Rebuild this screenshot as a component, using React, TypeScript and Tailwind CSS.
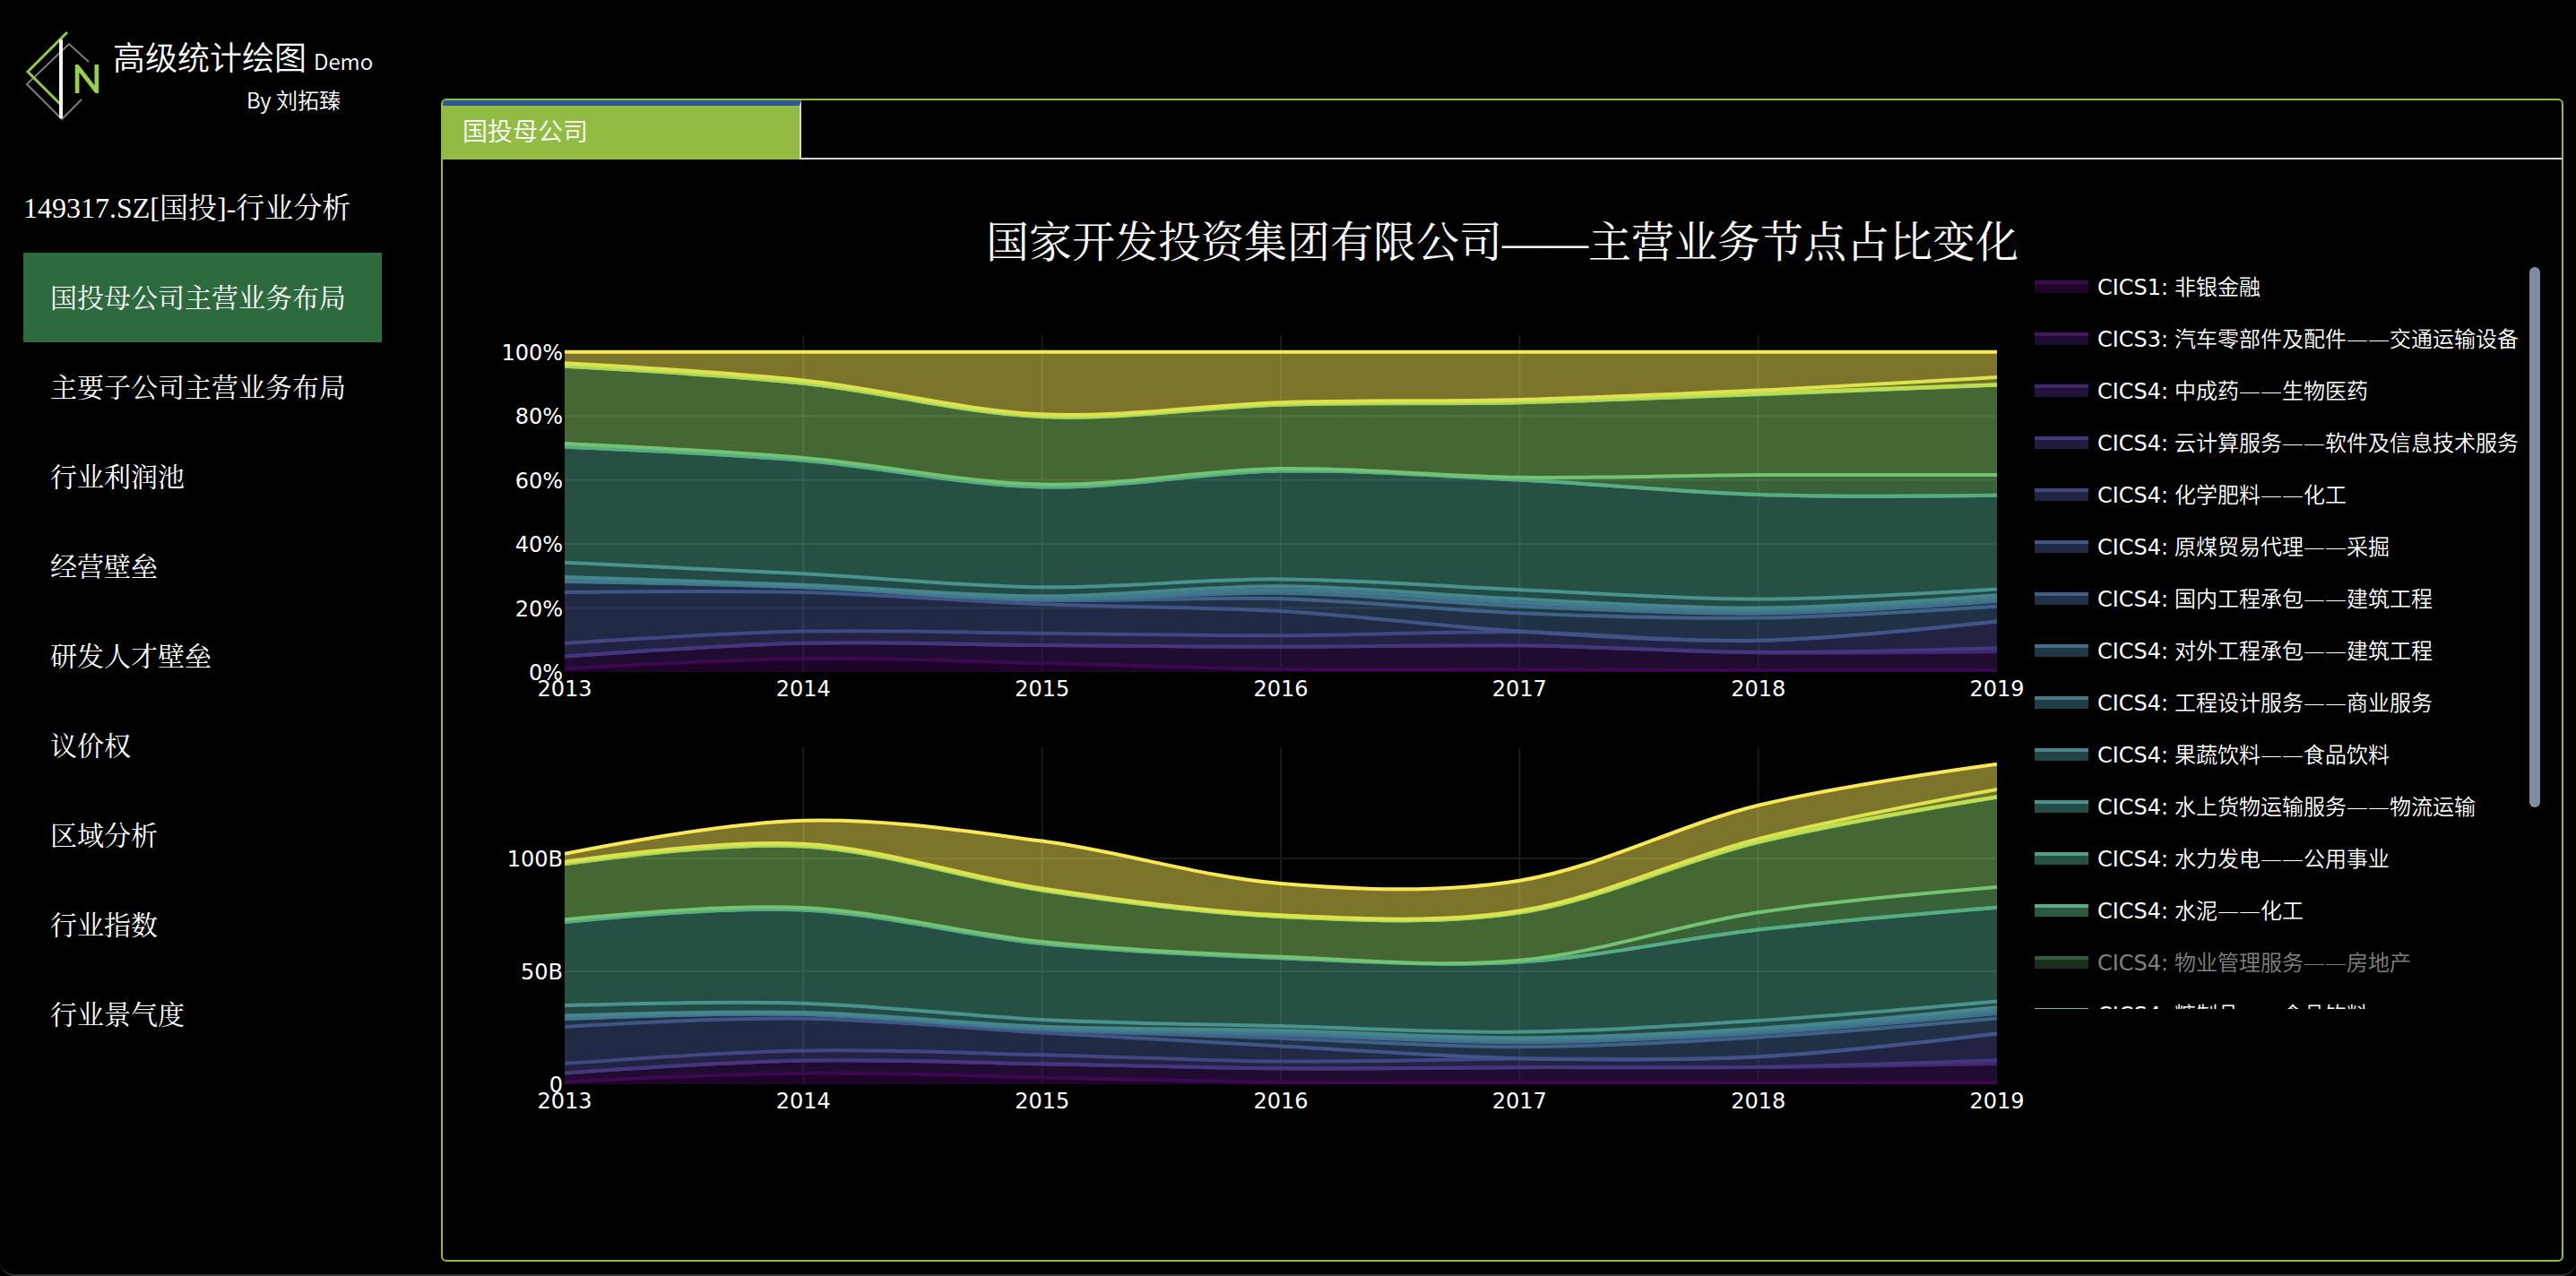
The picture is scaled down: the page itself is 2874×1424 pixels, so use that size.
import { useId } from "react";

type Point = [number, number];

const YEARS = [2013, 2014, 2015, 2016, 2017, 2018, 2019];

// Yearly totals, in billions.
const TOTALS = [102.1, 116.8, 107.7, 88.9, 90.2, 123.5, 141.8];

// Cumulative share of each layer, bottom to top, in percent.
const LAYERS: { color: string; share: number[] }[] = [
  { color: "#3e0751", share: [1.0, 4.2, 2.8, 0.9, 0.8, 0.5, 0.5] },
  { color: "#411761", share: [4.9, 9.0, 8.4, 7.9, 8.3, 6.1, 6.4] },
  { color: "#432772", share: [4.9, 9.0, 8.4, 7.9, 8.3, 6.1, 6.5] },
  { color: "#43377d", share: [4.9, 9.0, 8.4, 7.9, 8.3, 6.2, 7.5] },
  { color: "#434684", share: [9.0, 12.7, 12.1, 11.4, 12.5, 9.8, 15.8] },
  { color: "#415488", share: [24.9, 24.9, 21.2, 19.0, 12.7, 9.9, 15.8] },
  { color: "#3f6189", share: [28.3, 26.5, 22.5, 22.9, 18.4, 16.9, 20.6] },
  { color: "#406e8b", share: [28.4, 26.5, 22.5, 24.7, 20.6, 18.3, 22.1] },
  { color: "#417a8c", share: [28.5, 26.6, 22.8, 25.7, 21.7, 19.1, 23.0] },
  { color: "#45878c", share: [29.7, 27.2, 23.7, 26.8, 22.8, 20.0, 24.0] },
  { color: "#48938b", share: [34.2, 30.7, 26.5, 29.0, 25.7, 22.8, 25.9] },
  { color: "#4d9f88", share: [70.3, 66.1, 57.8, 62.8, 60.0, 55.4, 55.2] },
  { color: "#57ad82", share: [70.3, 66.1, 57.8, 62.8, 60.0, 55.4, 55.2] },
  { color: "#73c372", share: [71.4, 66.9, 58.6, 63.5, 60.8, 61.6, 61.6] },
  { color: "#8ace65", share: [95.5, 90.2, 79.7, 83.5, 84.2, 86.7, 89.6] },
  { color: "#a3d65a", share: [95.5, 90.2, 79.8, 83.5, 84.2, 86.8, 89.7] },
  { color: "#bfdd51", share: [96.1, 90.7, 80.1, 83.8, 84.7, 87.1, 89.8] },
  { color: "#dde34e", share: [96.5, 91.1, 80.5, 84.2, 85.1, 88.0, 92.1] },
  { color: "#f9e855", share: [100, 100, 100, 100, 100, 100, 100] },
];

const LEGEND = [
  { code: "CICS1:", label: "非银金融", color: "#3e0751" },
  { code: "CICS3:", label: "汽车零部件及配件——交通运输设备", color: "#411761" },
  { code: "CICS4:", label: "中成药——生物医药", color: "#432772" },
  { code: "CICS4:", label: "云计算服务——软件及信息技术服务", color: "#43377d" },
  { code: "CICS4:", label: "化学肥料——化工", color: "#434684" },
  { code: "CICS4:", label: "原煤贸易代理——采掘", color: "#415488" },
  { code: "CICS4:", label: "国内工程承包——建筑工程", color: "#3f6189" },
  { code: "CICS4:", label: "对外工程承包——建筑工程", color: "#406e8b" },
  { code: "CICS4:", label: "工程设计服务——商业服务", color: "#417a8c" },
  { code: "CICS4:", label: "果蔬饮料——食品饮料", color: "#45878c" },
  { code: "CICS4:", label: "水上货物运输服务——物流运输", color: "#48938b" },
  { code: "CICS4:", label: "水力发电——公用事业", color: "#4d9f88" },
  { code: "CICS4:", label: "水泥——化工", color: "#57ad82" },
  { code: "CICS4:", label: "物业管理服务——房地产", color: "#62b77c", hidden: true },
  { code: "CICS4:", label: "糖制品——食品饮料", color: "#73c372" },
];

const NAV = [
  "国投母公司主营业务布局",
  "主要子公司主营业务布局",
  "行业利润池",
  "经营壁垒",
  "研发人才壁垒",
  "议价权",
  "区域分析",
  "行业指数",
  "行业景气度",
];

// Plot area inside each chart's 1730 x 460 view box.
const LEFT = 90;
const RIGHT = 1688;
const TOP = 10;
const BOTTOM = 386;

// Control points on both sides of a point of a centripetal Catmull-Rom spline.
function tangent(prev: Point, cur: Point, next: Point): [Point, Point] {
  const d1 = [prev[0] - cur[0], prev[1] - cur[1]];
  const d2 = [next[0] - cur[0], next[1] - cur[1]];
  const a1 = Math.pow(d1[0] * d1[0] + d1[1] * d1[1], 0.25);
  const a2 = Math.pow(d2[0] * d2[0] + d2[1] * d2[1], 0.25);
  const nx = a2 * a2 * d1[0] - a1 * a1 * d2[0];
  const ny = a2 * a2 * d1[1] - a1 * a1 * d2[1];
  const k1 = 3 * a2 * (a1 + a2);
  const k2 = 3 * a1 * (a1 + a2);
  return [
    [cur[0] + nx / k1, cur[1] + ny / k1],
    [cur[0] - nx / k2, cur[1] - ny / k2],
  ];
}

const fmt = (p: Point) => `${p[0].toFixed(2)},${p[1].toFixed(2)}`;

// Spline through the points, without the leading move command.
function spline(pts: Point[]): string {
  const n = pts.length;
  const t: [Point, Point][] = [];
  for (let i = 1; i < n - 1; i++) t.push(tangent(pts[i - 1], pts[i], pts[i + 1]));
  let d = `Q${fmt(t[0][0])} ${fmt(pts[1])}`;
  for (let i = 2; i < n - 1; i++) d += `C${fmt(t[i - 2][1])} ${fmt(t[i - 1][0])} ${fmt(pts[i])}`;
  return d + `Q${fmt(t[n - 3][1])} ${fmt(pts[n - 1])}`;
}

type Tick = { label: string; value: number };

type ChartProps = {
  title: string;
  ticks: Tick[];
  perUnit: number;
  valueOf: (share: number, year: number) => number;
};

function StackedChart({ title, ticks, perUnit, valueOf }: ChartProps) {
  const clip = useId();
  const step = (RIGHT - LEFT) / (YEARS.length - 1);
  const y = (v: number) => BOTTOM - v * perUnit;
  const rows = LAYERS.map((layer) =>
    layer.share.map((s, i): Point => [LEFT + i * step, y(valueOf(s, i))]),
  );
  const base = YEARS.map((_, i): Point => [LEFT + i * step, BOTTOM]);

  return (
    <svg
      viewBox="0 0 1730 460"
      role="img"
      aria-label={title}
      className="block h-auto w-full fill-white font-['DejaVu_Sans',sans-serif] text-2xl"
    >
      <clipPath id={clip}>
        <rect x={LEFT} y={TOP} width={RIGHT - LEFT} height={BOTTOM - TOP} />
      </clipPath>
      <g stroke="#1a1a1a" strokeWidth="2">
        {YEARS.slice(1, -1).map((year, i) => (
          <line key={year} x1={LEFT + (i + 1) * step} x2={LEFT + (i + 1) * step} y1={TOP} y2={BOTTOM} />
        ))}
        {ticks.slice(1).map((t) => (
          <line key={t.label} x1={LEFT} x2={RIGHT} y1={y(t.value)} y2={y(t.value)} />
        ))}
      </g>
      <g clipPath={`url(#${clip})`}>
        {LAYERS.map((layer, i) => {
          const lower = [...(i ? rows[i - 1] : base)].reverse();
          return (
            <path
              key={layer.color}
              d={`M${fmt(rows[i][0])}${spline(rows[i])}L${fmt(lower[0])}${spline(lower)}Z`}
              fill={layer.color}
              fillOpacity="0.5"
            />
          );
        })}
        {LAYERS.map((layer, i) => (
          <path
            key={layer.color}
            d={`M${fmt(rows[i][0])}${spline(rows[i])}`}
            fill="none"
            stroke={layer.color}
            strokeWidth="4"
          />
        ))}
      </g>
      {ticks.map((t) => (
        <text key={t.label} x={LEFT - 2} y={y(t.value) + 9} textAnchor="end">
          {t.label}
        </text>
      ))}
      {YEARS.map((year, i) => (
        <text key={year} x={LEFT + i * step} y={BOTTOM + 27} textAnchor="middle">
          {year}
        </text>
      ))}
    </svg>
  );
}

function Logo() {
  return (
    <svg viewBox="0 0 90 140" aria-hidden="true" className="h-[140px] w-[90px] shrink-0" fill="none">
      <path d="M73 69 51 49 4 94 43 133 65 111" stroke="#7d7d7d" strokeWidth="2" />
      <path d="M49 36 5 80 41 116" stroke="#92c843" strokeWidth="3" />
      <path d="M42 44V132" stroke="#f2f2f2" strokeWidth="4" />
      <text x="54" y="104" className="fill-[#9bd04b] font-['Lato',sans-serif] text-[44px] font-semibold">
        N
      </text>
    </svg>
  );
}

export default function App() {
  return (
    <div className="bg-black font-['Noto_Sans_CJK_SC',sans-serif] text-white">
      <div className="flex min-h-screen rounded-b-2xl border-b-2 border-[#333333]">
        <aside className="w-[492px] shrink-0 pl-[26px]">
          <header className="flex h-[183px]">
            <Logo />
            <div className="ml-[10px] pt-[38px]">
              <h1 className="text-4xl leading-[48px] font-[350]">
                高级统计绘图 <span className="text-2xl">Demo</span>
              </h1>
              <p className="mt-[7px] ml-[149px] text-2xl leading-[36px] font-[350]">By 刘拓臻</p>
            </div>
          </header>
          <nav className="w-[400px] font-['Liberation_Serif','Noto_Serif_CJK_SC','Noto_Sans_CJK_SC',serif]">
            <h2 className="text-[32px] leading-[99px] whitespace-nowrap">149317.SZ[国投]-行业分析</h2>
            <ul>
              {NAV.map((item, i) => (
                <li key={item}>
                  <a
                    href="#"
                    aria-current={i === 0 ? "page" : undefined}
                    className={
                      i === 0
                        ? "block h-[100px] bg-[#2d6a3e] pl-[30px] text-3xl leading-[102px]"
                        : "block h-[100px] pl-[30px] text-3xl leading-[102px]"
                    }
                  >
                    {item}
                  </a>
                </li>
              ))}
            </ul>
          </nav>
        </aside>

        <main className="flex min-w-0 flex-1 flex-col pt-[110px] pr-[14px] pb-[14px]">
          <section className="flex-1 overflow-hidden rounded-md border-2 border-[#92bb44]">
            <div role="tablist" className="flex h-[66px]">
              <button
                type="button"
                role="tab"
                aria-selected="true"
                className="w-[400px] border-t-[6px] border-r-2 border-t-[#2f5897] border-r-[#d6d6d6] bg-[#92bb44] pb-[6px] pl-[22px] text-left text-[28px] leading-[40px] font-[350]"
              >
                国投母公司
              </button>
              <div className="flex-1 border-b-2 border-[#d6d6d6]" />
            </div>

            <h2 className="h-[113px] pt-[69px] text-center font-['Liberation_Serif','Noto_Serif_CJK_SC','Noto_Sans_CJK_SC',serif] text-5xl leading-[48px]">
              国家开发投资集团有限公司——主营业务节点占比变化
            </h2>

            <div className="flex items-start pr-6 pl-[46px]">
              <div className="min-w-0 flex-1 pt-[73px]">
                <StackedChart
                  title="主营业务节点占比"
                  perUnit={3.573}
                  valueOf={(share) => share}
                  ticks={[
                    { label: "0%", value: 0 },
                    { label: "20%", value: 20 },
                    { label: "40%", value: 40 },
                    { label: "60%", value: 60 },
                    { label: "80%", value: 80 },
                    { label: "100%", value: 100 },
                  ]}
                />
                <StackedChart
                  title="主营业务节点收入"
                  perUnit={2.52}
                  valueOf={(share, i) => (share / 100) * TOTALS[i]}
                  ticks={[
                    { label: "0", value: 0 },
                    { label: "50B", value: 50 },
                    { label: "100B", value: 100 },
                  ]}
                />
              </div>

              <div className="flex w-[564px] shrink-0 justify-between">
                <ul className="h-[835px] overflow-hidden font-['DejaVu_Sans','Noto_Sans_CJK_SC',sans-serif] text-2xl">
                  {LEGEND.map((entry) => (
                    <li
                      key={entry.code + entry.label}
                      className={
                        entry.hidden
                          ? "flex h-[58px] items-center whitespace-nowrap opacity-50"
                          : "flex h-[58px] items-center whitespace-nowrap"
                      }
                    >
                      <svg viewBox="0 0 60 14" aria-hidden="true" className="h-[14px] w-[60px]">
                        <rect y="2" width="60" height="12" fill={entry.color} fillOpacity="0.5" />
                        <rect width="60" height="4" fill={entry.color} />
                      </svg>
                      <span className="flex items-baseline pt-[2px] pl-[10px]">
                        <span className="w-[86px]">{entry.code}</span>
                        <span className="font-[350]">{entry.label}</span>
                      </span>
                    </li>
                  ))}
                </ul>
                <div className="mt-[7px] h-[603px] w-3 rounded-full bg-[#808ba4]" />
              </div>
            </div>
          </section>
        </main>
      </div>
    </div>
  );
}
